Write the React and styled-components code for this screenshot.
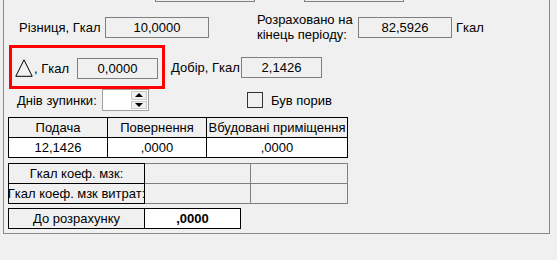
import React from "react";
import styled, { createGlobalStyle } from "styled-components";

const Global = createGlobalStyle`
  html, body { margin: 0; padding: 0; background: #f0f0f0; }
  body {
    font-family: "Liberation Sans", Arial, sans-serif;
    font-size: 13px;
    color: #000;
  }
`;

const Page = styled.div`
  width: 557px;
  height: 260px;
  overflow: hidden;
  background: #f0f0f0;
`;

const Panel = styled.div`
  box-sizing: border-box;
  margin-left: 3px;
  width: 547px;
  height: 234px;
  border: 1px solid #8a8a8a;
  border-top: none;
  display: flex;
  flex-direction: column;
`;

const StubRow = styled.div`
  display: flex;
  height: 2px;
`;

const Stub = styled.div`
  box-sizing: border-box;
  margin-left: ${(p) => p.$ml}px;
  width: 100px;
  height: 2px;
  border: 1px solid #808080;
  border-top: none;
`;

const Row = styled.div`
  display: flex;
  align-items: center;
  margin-top: ${(p) => p.$mt || 0}px;
  height: ${(p) => p.$h}px;
`;

const Label = styled.div`
  box-sizing: border-box;
  margin-left: ${(p) => p.$ml || 0}px;
  width: ${(p) => (p.$w ? `${p.$w}px` : "auto")};
  line-height: 15px;
  white-space: ${(p) => (p.$wrap ? "normal" : "nowrap")};
`;

const Field = styled.div`
  box-sizing: border-box;
  width: ${(p) => p.$w}px;
  height: 21px;
  border: 1px solid #808080;
  background: #f0f0f0;
  display: flex;
  align-items: center;
  justify-content: center;
  line-height: 15px;
`;

const RedBox = styled.div`
  box-sizing: border-box;
  margin-left: 5px;
  width: 156px;
  height: 44px;
  border: 3px solid #ff0000;
  display: flex;
  align-items: center;
  padding-left: 3px;
  padding-top: 2px;
`;

const Delta = styled.svg`
  width: 18px;
  height: 18px;
  flex: none;
  display: block;
  margin-right: 1px;
`;

const Spinner = styled.div`
  box-sizing: border-box;
  width: 47px;
  height: 22px;
  border: 1px solid #a0a0a0;
  background: #fff;
  display: flex;
  justify-content: flex-end;
`;

const SpinButtons = styled.div`
  width: 16px;
  display: flex;
  flex-direction: column;
  margin: 1px 1px 1px 0;
  gap: 1px;
`;

const SpinButton = styled.div`
  flex: 1;
  background: #f0f0f0;
  border: 1px solid #c8c8c8;
  display: flex;
  align-items: center;
  justify-content: center;
  &::after {
    content: "";
    width: 0;
    height: 0;
    border-left: 4px solid transparent;
    border-right: 4px solid transparent;
    ${(p) =>
      p.$down ? "border-top: 4px solid #000;" : "border-bottom: 4px solid #000;"}
  }
`;

const Check = styled.div`
  box-sizing: border-box;
  margin-left: 98px;
  width: 16px;
  height: 16px;
  border: 1px solid #333;
`;

const Grid = styled.div`
  box-sizing: border-box;
  align-self: flex-start;
  display: grid;
  grid-template-columns: ${(p) => p.$cols};
  grid-auto-rows: ${(p) => p.$rowH || 19}px;
  gap: 1px;
  background: ${(p) => p.$line};
  border: 1px solid ${(p) => p.$line};
  ${(p) => (p.$noLeft ? "border-left: none;" : "")}
`;

const Tables = styled.div`
  display: flex;
  flex-direction: column;
  align-items: flex-start;
  margin-left: 4px;
`;

const Cell = styled.div`
  background: ${(p) => (p.$white ? "#fff" : "#f0f0f0")};
  display: flex;
  align-items: center;
  justify-content: center;
  white-space: nowrap;
  overflow: hidden;
  font-weight: ${(p) => (p.$bold ? "bold" : "normal")};
`;

const SplitTable = styled.div`
  display: flex;
  margin-top: 5px;
`;

const Gap = styled.div`
  height: ${(p) => p.$h}px;
`;

export default function App() {
  return (
    <Page>
      <Global />
      <Panel>
        <StubRow>
          <Stub $ml={151} />
          <Stub $ml={49} />
        </StubRow>

        <Row $mt={10} $h={30}>
          <Label $ml={15} $w={86}>Різниця, Гкал</Label>
          <Field $w={104}>10,0000</Field>
          <Label $ml={48} $w={101} $wrap>
            Розраховано на кінець періоду:
          </Label>
          <Field $w={94}>82,5926</Field>
          <Label $ml={4}>Гкал</Label>
        </Row>

        <Row $mt={3} $h={44}>
          <RedBox>
            <Delta viewBox="0 0 18 18">
              <path d="M9 0.8 L0.8 17.3 L17.2 17.3 Z" fill="none" stroke="#000" strokeWidth="1" />
            </Delta>
            <Label $w={43}>, Гкал</Label>
            <Field $w={81}>0,0000</Field>
          </RedBox>
          <Label $ml={6} $w={70}>Добір, Гкал</Label>
          <Field $w={81}>2,1426</Field>
        </Row>

        <Row $h={22}>
          <Label $ml={13} $w={85}>Днів зупинки:</Label>
          <Spinner>
            <SpinButtons>
              <SpinButton />
              <SpinButton $down />
            </SpinButtons>
          </Spinner>
          <Check />
          <Label $ml={8}>Був порив</Label>
        </Row>

        <Tables>
          <Gap $h={6} />
          <Grid $cols="98px 98px 140px" $line="#000">
            <Cell>Подача</Cell>
            <Cell>Повернення</Cell>
            <Cell>Вбудовані приміщення</Cell>
            <Cell $white>12,1426</Cell>
            <Cell $white>,0000</Cell>
            <Cell $white>,0000</Cell>
          </Grid>

          <SplitTable>
            <Grid $cols="135px" $line="#000">
              <Cell>Гкал коеф. мзк:</Cell>
              <Cell>Гкал коеф. мзк витрат:</Cell>
            </Grid>
            <Grid $cols="105px 96px" $line="#808080" $noLeft>
              <Cell />
              <Cell />
              <Cell />
              <Cell />
            </Grid>
          </SplitTable>

          <Gap $h={4} />
          <Grid $cols="135px 95px" $rowH={19} $line="#000">
            <Cell>До розрахунку</Cell>
            <Cell $white $bold>,0000</Cell>
          </Grid>
        </Tables>
      </Panel>
    </Page>
  );
}
